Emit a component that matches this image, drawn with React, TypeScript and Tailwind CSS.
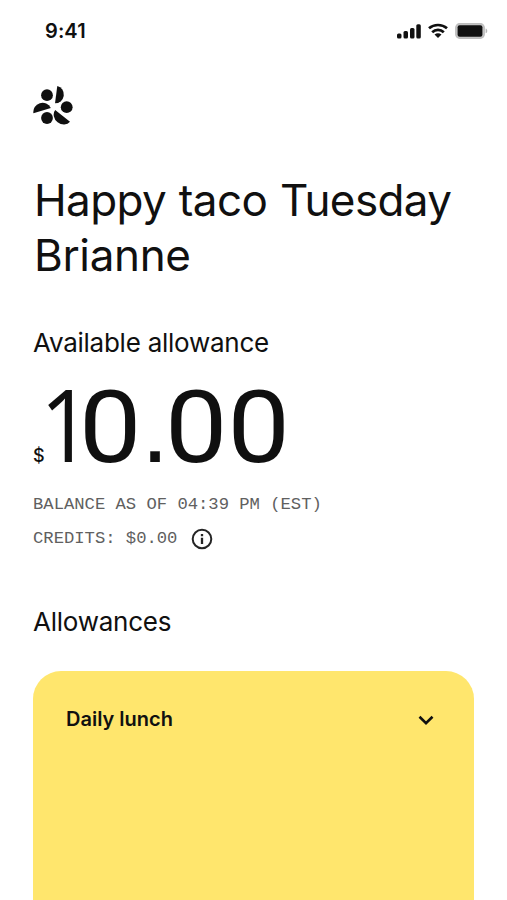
import React from 'react';
import { ChevronDown } from 'lucide-react';

const Logo = () => (
  <svg width="40" height="40" viewBox="0 0 40 40" fill="#101010" aria-label="Home">
    <circle cx="14" cy="10.200" r="5.900" />
    <circle cx="33.700" cy="22.200" r="5.900" />
    <circle cx="14" cy="33" r="5.900" />
    <path d="M24.300 1A8.800 8.800 0 0 1 22 18.300Z" />
    <path d="M.4 28.300A9.200 9.200 0 0 1 17.800 23Z" />
    <path d="M22.200 25A9.400 8 38 0 0 37 36.700Z" />
  </svg>
);

const SignalIcon = () => (
  <svg width="24" height="16" viewBox="0 0 24 16" fill="#101010">
    <rect x="0" y="10.500" width="4.500" height="5" rx="1.500" />
    <rect x="6.500" y="8" width="4.500" height="7.500" rx="1.500" />
    <rect x="13" y="5" width="4.500" height="10.500" rx="1.500" />
    <rect x="19.300" y="1.300" width="4.500" height="14.200" rx="1.500" />
  </svg>
);

const WifiIcon = () => (
  <svg width="20" height="16" viewBox="0 0 20 16" fill="none" stroke="#101010" strokeWidth="2.700">
    <path d="M1 5.300C6 .9 14 .9 19 5.300" />
    <path d="M4.200 9.200C7.500 6 12.500 6 15.800 9.200" />
    <path d="M6.500 11.600C8.700 9.700 11.300 9.700 13.500 11.600L10 15Z" fill="#101010" stroke="none" />
  </svg>
);

const BatteryIcon = () => (
  <svg width="33" height="16" viewBox="0 0 33 16">
    <rect x="0.700" y="0.700" width="28.600" height="14.600" rx="4" fill="#c4c4c4" stroke="#bdbdbd" strokeWidth="1.200" />
    <rect x="2.600" y="2.300" width="24.800" height="11.400" rx="2" fill="#101010" />
    <path d="M30.600 5.500C32.800 6 32.800 9.800 30.600 10.300Z" fill="#b5b5b5" />
  </svg>
);

const InfoIcon = () => (
  <svg width="22" height="22" viewBox="0 0 22 22" fill="none" stroke="#252525" strokeWidth="2">
    <circle cx="11" cy="11" r="9.300" />
    <path d="M11 9.700V16M11 6V8.200" strokeWidth="2.300" />
  </svg>
);

const StatusBar = () => (
  <div className="flex h-[62px] items-center justify-between pl-[45px] pr-[19px]">
    <span className="text-[20px] font-semibold leading-none tracking-[0.1px]">9:41</span>
    <div className="flex items-center gap-[7px]">
      <SignalIcon />
      <WifiIcon />
      <BatteryIcon />
    </div>
  </div>
);

// Large display figure, each glyph group gets its own width
const Balance = () => (
  <div className="flex h-[98px] items-baseline whitespace-nowrap font-['Roboto',sans-serif] text-[101px] leading-[98px]">
    <span className="w-[7px] shrink-0 font-['Inter',sans-serif] text-[18px] font-medium">$</span>
    <span className="w-[39px] shrink-0 origin-left scale-x-90 font-['Open_Sans',sans-serif] font-medium">1</span>
    <span className="w-[62px] shrink-0 origin-left scale-x-110">0</span>
    <span className="w-[24px] shrink-0 font-['Liberation_Sans',sans-serif]">.</span>
    <span className="shrink-0 origin-left scale-x-110">00</span>
  </div>
);

export default function App() {
  return (
    <div className="h-[900px] w-[507px] overflow-hidden bg-white font-['Inter',sans-serif] text-[#101010]">
      <StatusBar />

      <main className="px-[33px] pt-[23px]">
        <Logo />

        <h1 className="ml-px mt-[48px] whitespace-nowrap text-[44px] leading-[55px] tracking-[-0.62px] [word-spacing:1px]">
          Happy taco Tuesday
          <br />
          <span className="tracking-[-0.35px]">Brianne</span>
        </h1>

        <section>
          <h2 className="mt-[43px] text-[26px] leading-[34px] tracking-[-0.25px]">Available allowance</h2>
          <div className="mb-[16px] mt-[14px]">
            <Balance />
          </div>
          <div className="font-['Liberation_Mono',monospace] text-[17.2px] leading-[34px] text-[#606060]">
            <p className="whitespace-pre">BALANCE AS OF 04:39 PM (EST)</p>
            <div className="flex items-center gap-[14px]">
              <span className="whitespace-pre">CREDITS: $0.00</span>
              <InfoIcon />
            </div>
          </div>
        </section>

        <section>
          <h2 className="mt-[49px] text-[26px] leading-[34px] tracking-[-0.25px]">Allowances</h2>
          <div className="mt-[32px] flex h-[260px] w-[441px] items-start justify-between rounded-t-[28px] bg-[#ffe66d] pl-[33px] pr-[35px] pt-[36px]">
            <span className="text-[20px] font-semibold leading-[25px]">Daily lunch</span>
            <ChevronDown size={26} strokeWidth={2.4} strokeLinecap="butt" strokeLinejoin="miter" />
          </div>
        </section>
      </main>
    </div>
  );
}
